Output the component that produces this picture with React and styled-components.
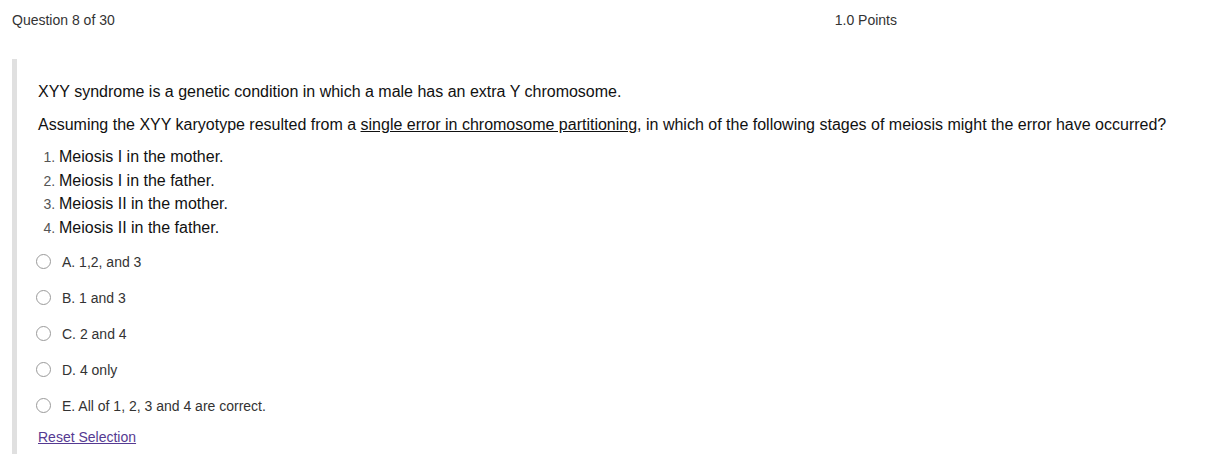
import styled, {createGlobalStyle} from 'styled-components';

const GlobalStyle = createGlobalStyle`
    body {
        margin: 0;
        background: #fff;
        font-family: 'Liberation Sans', Arial, sans-serif;
    }
`;

const Page = styled.div`
    padding: 12px 0 0 12px;
`;

const Header = styled.div`
    display: flex;
    justify-content: space-between;
    width: 885px;
    font-size: 14px;
    line-height: 16px;
    color: #333;
`;

const QuestionBox = styled.div`
    margin-top: 31px;
    border-left: 5px solid #e0e0e0;
    padding: 22px 0 10px 21px;
    color: #111;
`;

const Para = styled.p`
    margin: 0 0 ${props => props.$gap}px;
    font-size: 16px;
    line-height: 21px;
`;

const Underlined = styled.span`
    text-decoration: underline;
`;

const Steps = styled.ol`
    margin: 0 0 4px;
    padding-left: 21px;
    font-size: 16px;
    line-height: 23.7px;

    li::marker {
        font-size: 14px;
        color: #555;
    }
`;

const Option = styled.label`
    display: flex;
    align-items: center;
    gap: 11px;
    height: 36px;
    margin-left: -2px;
    font-size: 14px;
    color: #333;
`;

const Radio = styled.span`
    width: 15px;
    height: 15px;
    box-sizing: border-box;
    border: 1px solid #9a9a9a;
    border-radius: 50%;
    background: #fff;
    flex-shrink: 0;
`;

const ResetLink = styled.a`
    display: inline-block;
    margin-top: 4px;
    font-size: 14px;
    line-height: 18px;
    color: #553a92;
    text-decoration: underline;
    cursor: pointer;
`;

const steps = [
    'Meiosis I in the mother.',
    'Meiosis I in the father.',
    'Meiosis II in the mother.',
    'Meiosis II in the father.',
];

const options = [
    'A. 1,2, and 3',
    'B. 1 and 3',
    'C. 2 and 4',
    'D. 4 only',
    'E. All of 1, 2, 3 and 4 are correct.',
];

function App() {
    return (
        <Page>
            <GlobalStyle />
            <Header>
                <span>Question 8 of 30</span>
                <span>1.0 Points</span>
            </Header>
            <QuestionBox>
                <Para $gap={12}>XYY syndrome is a genetic condition in which a male has an extra Y chromosome.</Para>
                <Para $gap={10}>
                    Assuming the XYY karyotype resulted from a <Underlined>single error in chromosome partitioning</Underlined>, in which of the following stages of meiosis might the error have occurred?
                </Para>
                <Steps>
                    {steps.map(s => <li key={s}>{s}</li>)}
                </Steps>
                {options.map(o => (
                    <Option key={o}>
                        <Radio />
                        {o}
                    </Option>
                ))}
                <ResetLink>Reset Selection</ResetLink>
            </QuestionBox>
        </Page>
    );
}

export default App;
